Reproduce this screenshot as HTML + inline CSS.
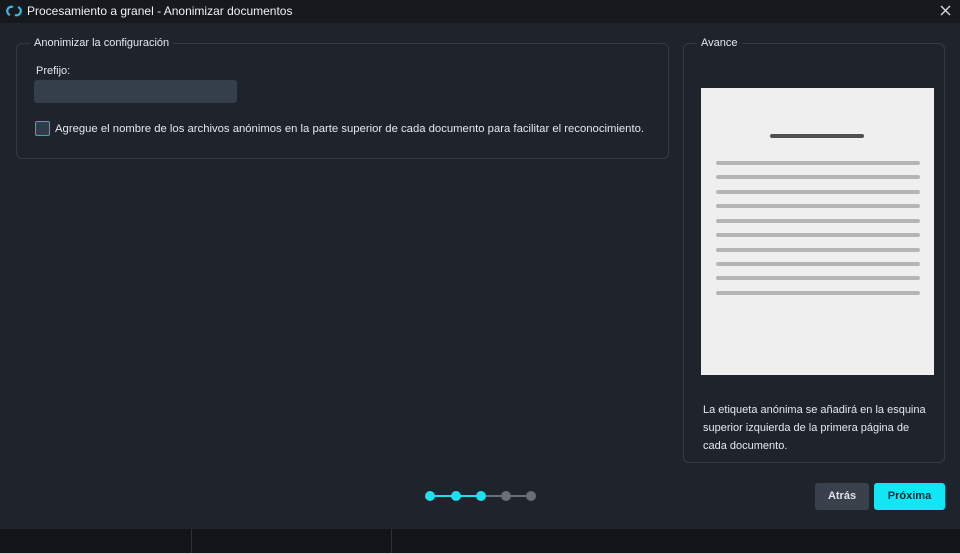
<!DOCTYPE html>
<html><head><meta charset="utf-8"><style>
*{margin:0;padding:0;box-sizing:border-box}
body{width:960px;height:554px;background:#1f242c;font-family:"Liberation Sans",sans-serif;color:#e6e8eb;position:relative;overflow:hidden;font-size:11px}
.title{position:absolute;left:0;top:0;width:960px;height:23px;background:#16191e}
.title span{position:absolute;left:27px;top:4px;font-size:12px;color:#eef0f2}
.fs{position:absolute;border:1px solid #343a44;border-radius:6px}
.lg{position:absolute;background:#1f242c;padding:0 4px;font-size:11px;top:-7px}
.line{position:absolute;height:4px;border-radius:2px;background:#b5b5b5;left:716px;width:204px}
</style></head><body>
<div class="title">
<svg style="position:absolute;left:6px;top:4px" width="16" height="14" viewBox="0 0 16 14"><path d="M7 3 A4 4 0 1 0 4 11" stroke="#3fb8e0" stroke-width="2.2" fill="none"/><path d="M9 11 A4 4 0 1 0 12 3" stroke="#3fb8e0" stroke-width="2.2" fill="none"/></svg>
<span>Procesamiento a granel - Anonimizar documentos</span>
<svg style="position:absolute;left:940px;top:5px" width="11" height="11"><path d="M1 1L10 10M10 1L1 10" stroke="#d8dadc" stroke-width="1.4"/></svg>
</div>
<div class="fs" style="left:16px;top:43px;width:653px;height:116px">
<div class="lg" style="left:13px">Anonimizar la configuración</div>
<div style="position:absolute;left:19px;top:21px">Prefijo:</div>
<div style="position:absolute;left:17px;top:36px;width:203px;height:23px;background:#353e4b;border-radius:3px"></div>
<div style="position:absolute;left:18px;top:77px;width:15px;height:15px;border:1.5px solid #3fa7b6;background:#323b47;border-radius:2px"></div>
<div style="position:absolute;left:38px;top:79px;font-size:11.3px">Agregue el nombre de los archivos anónimos en la parte superior de cada documento para facilitar el reconocimiento.</div>
</div>
<div class="fs" style="left:683px;top:43px;width:262px;height:420px">
<div class="lg" style="left:13px">Avance</div>
<div style="position:absolute;left:19px;top:357px;width:230px;line-height:18px;font-size:11px">La etiqueta anónima se añadirá en la esquina superior izquierda de la primera página de cada documento.</div>
</div>
<div style="position:absolute;left:701px;top:88px;width:233px;height:287px;background:#efefef"></div>
<div style="position:absolute;left:770px;top:134px;width:94px;height:4px;border-radius:2px;background:#505050"></div>
<div class="line" style="top:161px"></div><div class="line" style="top:175px"></div><div class="line" style="top:190px"></div><div class="line" style="top:204px"></div><div class="line" style="top:219px"></div><div class="line" style="top:233px"></div><div class="line" style="top:248px"></div><div class="line" style="top:262px"></div><div class="line" style="top:276px"></div><div class="line" style="top:291px"></div>
<svg style="position:absolute;left:420px;top:486px" width="120" height="20">
<line x1="10" y1="10" x2="61" y2="10" stroke="#1de0f0" stroke-width="2"/>
<line x1="61" y1="10" x2="111" y2="10" stroke="#6a6e75" stroke-width="2"/>
<circle cx="10" cy="10" r="5" fill="#1de0f0"/><circle cx="36" cy="10" r="5" fill="#1de0f0"/><circle cx="61" cy="10" r="5" fill="#1de0f0"/><circle cx="86" cy="10" r="5" fill="#6a6e75"/><circle cx="111" cy="10" r="5" fill="#6a6e75"/>
</svg>
<div style="position:absolute;left:815px;top:483px;width:54px;height:27px;background:#39414d;border-radius:3px;text-align:center;line-height:27px;font-weight:bold;color:#dfe2e6">Atrás</div>
<div style="position:absolute;left:874px;top:483px;width:71px;height:27px;background:#12e6f5;border-radius:3px;text-align:center;line-height:27px;font-weight:bold;color:#0c2a33">Próxima</div>
<div style="position:absolute;left:0;top:529px;width:960px;height:24px;background:#111419"></div>
<div style="position:absolute;left:191px;top:529px;width:1px;height:24px;background:#2c3038"></div>
<div style="position:absolute;left:391px;top:529px;width:1px;height:24px;background:#2c3038"></div>
<div style="position:absolute;left:0;top:553px;width:960px;height:1px;background:#cfd1d4"></div>
</body></html>
